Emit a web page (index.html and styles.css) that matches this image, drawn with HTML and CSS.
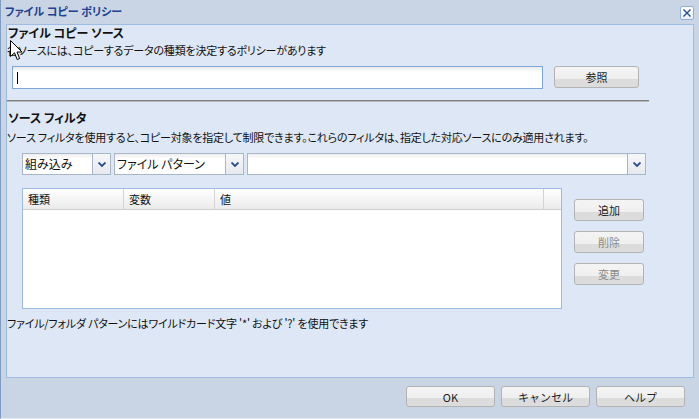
FILE: index.html
```html
<!DOCTYPE html>
<html lang="ja">
<head>
    <meta charset="UTF-8">
    <meta name="viewport" content="width=device-width, initial-scale=1.0">
    <title>ファイル コピー ポリシー</title>
    <link rel="stylesheet" href="styles.css">
</head>
<body>

    <div class="window">
        <div class="titlebar">
            <span class="title">ファイル コピー ポリシー</span>
            <span class="close">
                <svg width="10" height="10" viewBox="0 0 10 10"><path d="M1.5 1.5 L8.5 8.5 M8.5 1.5 L1.5 8.5" stroke="#2b4c94" stroke-width="1.4" fill="none"/></svg>
            </span>
        </div>

        <div class="panel">
            <h2 class="heading">ファイル コピー ソース</h2>
            <p class="desc">各ソースには、コピーするデータの種類を決定するポリシーがあります</p>

            <div class="source-row">
                <div class="text-input"><span class="caret"></span></div>
                <button class="btn browse">参照</button>
            </div>

            <div class="sep"></div>

            <h2 class="heading second">ソース フィルタ</h2>
            <p class="desc second">ソース フィルタを使用すると、コピー対象を指定して制限できます。これらのフィルタは、指定した対応ソースにのみ適用されます。</p>

            <div class="combo-row">
                <div class="combo combo-kind">
                    <span class="combo-text">組み込み</span>
                    <span class="combo-arrow"><svg width="8" height="5" viewBox="0 0 8 5"><path d="M0.5 0.5 L4 4 L7.5 0.5" stroke="#2a4a8c" stroke-width="1.8" fill="none"/></svg></span>
                </div>
                <div class="combo combo-type">
                    <span class="combo-text">ファイル パターン</span>
                    <span class="combo-arrow"><svg width="8" height="5" viewBox="0 0 8 5"><path d="M0.5 0.5 L4 4 L7.5 0.5" stroke="#2a4a8c" stroke-width="1.8" fill="none"/></svg></span>
                </div>
                <div class="combo combo-value">
                    <span class="combo-text"></span>
                    <span class="combo-arrow"><svg width="8" height="5" viewBox="0 0 8 5"><path d="M0.5 0.5 L4 4 L7.5 0.5" stroke="#2a4a8c" stroke-width="1.8" fill="none"/></svg></span>
                </div>
            </div>

            <div class="table-row">
                <div class="grid">
                    <div class="grid-head">
                        <div class="col col-kind">種類</div>
                        <div class="col col-var">変数</div>
                        <div class="col col-val">値</div>
                        <div class="col col-end"></div>
                    </div>
                    <div class="grid-body"></div>
                </div>
                <div class="side-buttons">
                    <button class="btn side">追加</button>
                    <button class="btn side" disabled>削除</button>
                    <button class="btn side" disabled>変更</button>
                </div>
            </div>

            <p class="note">ファイル/フォルダ パターンにはワイルドカード文字 '*' および '?' を使用できます</p>

            <svg class="cursor" width="13" height="21" viewBox="0 0 13 21">
                <path d="M0.5 0.5 L0.5 16.5 L4.5 12.8 L7.2 19.5 L9.6 18.5 L7 12 L12 12 Z" fill="#fff" stroke="#000" stroke-width="1"/>
            </svg>
        </div>

        <div class="footer">
            <button class="btn foot">OK</button>
            <button class="btn foot">キャンセル</button>
            <button class="btn foot">ヘルプ</button>
        </div>
    </div>

</body>
</html>
```

FILE: styles.css
```css
body {
    margin: 0;
    font-family: "Noto Sans CJK JP", "Noto Sans", sans-serif;
    font-size: 12px;
    color: #111;
    background-color: #c9d5e5;
}
.window {
    width: 698px;
    height: 418px;
    background-color: #c9d5e5;
    border-left: 1px solid #7f9cc4;
    border-bottom: 1px solid #e4e9f0;
    display: flex;
    flex-direction: column;
}
.titlebar {
    height: 24px;
    display: flex;
    align-items: flex-start;
    justify-content: space-between;
}
.title {
    margin: 3px 0 0 4px;
    font-size: 11px;
    font-weight: bold;
    line-height: 16px;
    color: #22428f;
    font-feature-settings: "palt";
}
.close {
    width: 12px;
    height: 12px;
    margin: 6px 5px 0 0;
    border: 1px solid #8fb0dc;
    border-radius: 2px;
    background: linear-gradient(#ffffff, #e8eef8);
    display: flex;
    align-items: center;
    justify-content: center;
}
.panel {
    position: relative;
    width: 686px;
    height: 352px;
    margin-left: 5px;
    border: 1px solid #9dbbe3;
    background-color: #dee7f5;
}
.heading {
    margin: 0 0 0 1px;
    font-size: 12px;
    font-weight: bold;
    line-height: 16px;
    font-feature-settings: "palt";
}
.heading.second {
    margin-top: 8px;
}
.desc {
    margin: 1px 0 0 0;
    font-size: 11px;
    letter-spacing: -0.2px;
    line-height: 16px;
    font-feature-settings: "palt";
    white-space: nowrap;
}
.desc.second {
    margin-top: 3px;
}
.source-row {
    display: flex;
    align-items: flex-start;
    margin: 8px 0 0 5px;
}
.text-input {
    width: 529px;
    height: 21px;
    border: 1px solid #7ea7da;
    background: linear-gradient(#e9e9e9 0, #ffffff 5px);
    position: relative;
}
.caret {
    position: absolute;
    left: 4px;
    top: 5px;
    width: 1px;
    height: 12px;
    background-color: #000;
}
.btn {
    font-family: "Noto Sans CJK JP", "Noto Sans", sans-serif;
    font-size: 11px;
    color: #222;
    padding: 0;
    border: 1px solid #b3b3b3;
    border-radius: 3px;
    background: linear-gradient(#f4f4f4 0, #efefef 58%, #dcdcdc 58%, #dcdcdc 100%);
    line-height: 18px;
    cursor: pointer;
}
.btn:disabled {
    color: #8a8a8a;
}
.browse {
    width: 85px;
    height: 22px;
    margin-left: 11px;
}
.sep {
    width: 642px;
    margin-top: 11px;
    border-top: 1px solid #7d7d7d;
    border-bottom: 1px solid #b8b8b8;
}
.combo-row {
    display: flex;
    gap: 3px;
    margin: 8px 0 0 15px;
}
.combo {
    height: 20px;
    border: 1px solid #a9b6c8;
    background: linear-gradient(#eeeeee 0, #ffffff 5px);
    display: flex;
}
.combo-kind {
    width: 87px;
}
.combo-type {
    width: 128px;
}
.combo-value {
    width: 397px;
}
.combo-text {
    flex-grow: 1;
    padding-left: 2px;
    line-height: 20px;
    font-feature-settings: "palt";
    white-space: nowrap;
}
.combo-arrow {
    width: 17px;
    border-left: 1px solid #a9b6c8;
    background: linear-gradient(#f6f7f9, #e6e9ee);
    display: flex;
    align-items: center;
    justify-content: center;
}
.table-row {
    display: flex;
    align-items: flex-start;
    margin: 13px 0 0 15px;
}
.grid {
    width: 538px;
    height: 119px;
    border: 1px solid #9dbbe3;
    background-color: #fff;
}
.grid-head {
    height: 20px;
    display: flex;
    border-bottom: 1px solid #cfcfcf;
    background: linear-gradient(#ffffff, #ebebeb);
}
.col {
    line-height: 20px;
    padding-left: 5px;
    border-right: 1px solid #d4d4d4;
    box-sizing: border-box;
    font-size: 11px;
}
.col-kind {
    width: 101px;
}
.col-var {
    width: 91px;
}
.col-val {
    width: 329px;
}
.col-end {
    flex-grow: 1;
    border-right: none;
}
.side-buttons {
    display: flex;
    flex-direction: column;
    gap: 10px;
    margin: 11px 0 0 12px;
}
.side {
    width: 70px;
    height: 22px;
}
.note {
    margin: 6px 0 0 0;
    font-size: 11px;
    letter-spacing: -0.2px;
    line-height: 16px;
    font-feature-settings: "palt";
    white-space: nowrap;
}
.cursor {
    position: absolute;
    left: 3px;
    top: 15px;
}
.footer {
    display: flex;
    justify-content: flex-end;
    gap: 6px;
    padding: 8px 14px 0 0;
}
.foot {
    width: 89px;
    height: 21px;
}
```
